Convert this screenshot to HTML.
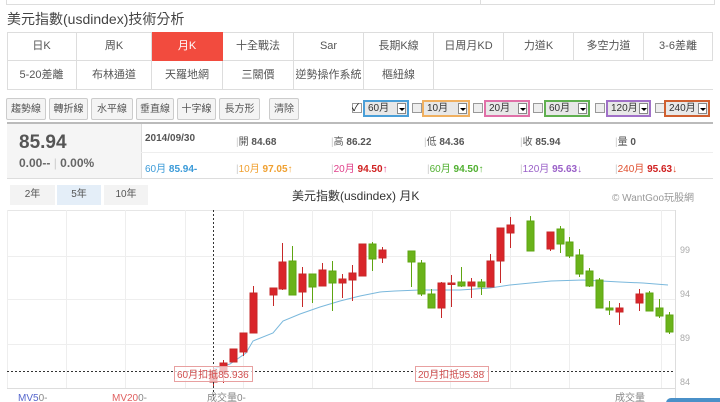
<!DOCTYPE html>
<html><head><meta charset="utf-8"><style>
body{margin:0;width:720px;height:402px;overflow:hidden;background:#fff;font-family:"Liberation Sans","Noto Sans CJK TC",sans-serif;position:relative;color:#555}
.a{position:absolute;white-space:nowrap}
.tab{position:absolute;height:29px;line-height:29px;text-align:center;font-size:11px;color:#555;border-right:1px solid #ddd;border-bottom:1px solid #ddd;box-sizing:border-box}
.btn{position:absolute;top:98px;height:22px;line-height:22px;border:1px solid #ccc;border-radius:2px;background:#f4f4f4;font-size:10px;text-align:center;box-sizing:border-box;color:#555}
.cb{position:absolute;top:103px;width:8px;height:8px;border:1px solid #999;background:#eee}
.sel{position:absolute;top:100px;height:17px;border:2px solid;box-sizing:border-box;font-size:10px;line-height:13px;padding-left:3px;background:#e8e8e8;color:#333}
.sel i{position:absolute;right:1px;top:1px;width:9px;height:11px;background:#fff;border:1px solid #888;box-sizing:border-box}
.sel i:after{content:"";position:absolute;left:1px;top:4px;border:3px solid transparent;border-top:3px solid #000}
.c{font-size:10px;color:#555}
</style></head><body>
<div class="a" style="left:6px;top:-1px;width:707px;height:5px;border:1px solid #ddd;border-top:0"></div>
<div class="a" style="left:480px;top:0;width:1px;height:5px;background:#ddd"></div>
<div class="a" style="left:7px;top:9px;font-size:14px;color:#444">美元指數(usdindex)技術分析</div>
<div class="a" style="left:7px;top:32px;width:706px;height:58px;border:1px solid #ddd;border-right:0;box-sizing:border-box"></div>
<div class="tab" style="left:7px;top:32px;width:70px;border-top:0">日K</div>
<div class="tab" style="left:77px;top:32px;width:75px">周K</div>
<div class="tab" style="left:152px;top:32px;width:71px;background:#f24b3e;color:#fff;border-color:#f24b3e">月K</div>
<div class="tab" style="left:223px;top:32px;width:71px">十全戰法</div>
<div class="tab" style="left:294px;top:32px;width:70px">Sar</div>
<div class="tab" style="left:364px;top:32px;width:70px">長期K線</div>
<div class="tab" style="left:434px;top:32px;width:70px">日周月KD</div>
<div class="tab" style="left:504px;top:32px;width:70px">力道K</div>
<div class="tab" style="left:574px;top:32px;width:70px">多空力道</div>
<div class="tab" style="left:644px;top:32px;width:69px">3-6差離</div>
<div class="tab" style="left:7px;top:61px;width:70px">5-20差離</div>
<div class="tab" style="left:77px;top:61px;width:75px">布林通道</div>
<div class="tab" style="left:152px;top:61px;width:71px">天羅地網</div>
<div class="tab" style="left:223px;top:61px;width:71px">三關價</div>
<div class="tab" style="left:294px;top:61px;width:70px">逆勢操作系統</div>
<div class="tab" style="left:364px;top:61px;width:70px">樞紐線</div>
<div class="btn" style="left:6px;width:40px">趨勢線</div>
<div class="btn" style="left:49px;width:39px">轉折線</div>
<div class="btn" style="left:91px;width:42px">水平線</div>
<div class="btn" style="left:136px;width:38px">垂直線</div>
<div class="btn" style="left:177px;width:39px">十字線</div>
<div class="btn" style="left:219px;width:41px">長方形</div>
<div class="btn" style="left:269px;width:30px">清除</div>
<div class="cb" style="left:352px;background:#fff">​</div>
<div class="a" style="left:352px;top:99px;font-size:10px;color:#000">✓</div>
<div class="sel" style="left:363px;width:46px;border-color:#4a9fd8">60月<i></i></div>
<div class="cb" style="left:412px"></div>
<div class="sel" style="left:422px;width:48px;border-color:#f0b060">10月<i></i></div>
<div class="cb" style="left:473px"></div>
<div class="sel" style="left:484px;width:46px;border-color:#e070a8">20月<i></i></div>
<div class="cb" style="left:533px"></div>
<div class="sel" style="left:544px;width:46px;border-color:#60b050">60月<i></i></div>
<div class="cb" style="left:595px"></div>
<div class="sel" style="left:606px;width:45px;border-color:#a070c8">120月<i></i></div>
<div class="cb" style="left:655px"></div>
<div class="sel" style="left:664px;width:46px;border-color:#d06030">240月<i></i></div>
<div class="a" style="left:7px;top:122px;width:706px;height:2px;background:#bbb"></div>
<div class="a" style="left:7px;top:124px;width:134px;height:54px;background:#f5f5f5;border-right:1px solid #ddd"></div>
<div class="a" style="left:141px;top:152px;width:572px;height:1px;background:#eee"></div>
<div class="a" style="left:7px;top:178px;width:706px;height:1px;background:#ddd"></div>
<div class="a" style="left:19px;top:132px;font-size:19px;font-weight:bold;color:#555">85.94</div>
<div class="a" style="left:19px;top:156px;font-size:12px;font-weight:bold;color:#666">0.00-- <span style="color:#ccc;font-weight:normal">|</span> 0.00%</div>
<div class="a c" style="left:145px;top:133px;font-weight:bold">2014/09/30</div>
<div class="a c" style="left:236px;top:133px"><span style="color:#ccc">|</span>開 <b>84.68</b></div>
<div class="a c" style="left:331px;top:133px"><span style="color:#ccc">|</span>高 <b>86.22</b></div>
<div class="a c" style="left:424px;top:133px"><span style="color:#ccc">|</span>低 <b>84.36</b></div>
<div class="a c" style="left:520px;top:133px"><span style="color:#ccc">|</span>收 <b>85.94</b></div>
<div class="a c" style="left:615px;top:133px"><span style="color:#ccc">|</span>量 <b>0</b></div>
<div class="a c" style="left:145px;top:160px;color:#3a9ad8">60月 <b>85.94-</b></div>
<div class="a c" style="left:236px;top:160px;color:#f0a030"><span style="color:#ccc">|</span>10月 <b>97.05</b>↑</div>
<div class="a c" style="left:331px;top:160px;color:#e0408a"><span style="color:#ccc">|</span>20月 <b style="color:#d02020">94.50</b>↑</div>
<div class="a c" style="left:427px;top:160px;color:#50b030"><span style="color:#ccc">|</span>60月 <b>94.50</b>↑</div>
<div class="a c" style="left:520px;top:160px;color:#9a60c8"><span style="color:#ccc">|</span>120月 <b>95.63</b>↓</div>
<div class="a c" style="left:615px;top:160px;color:#e05030"><span style="color:#ccc">|</span>240月 <b style="color:#d02020">95.63</b>↓</div>
<div class="a" style="left:10px;top:185px;width:45px;height:20px;background:#f3f3f3;font-size:10px;line-height:20px;text-align:center">2年</div>
<div class="a" style="left:57px;top:185px;width:44px;height:20px;background:#e4eef8;font-size:10px;line-height:20px;text-align:center">5年</div>
<div class="a" style="left:104px;top:185px;width:44px;height:20px;background:#f3f3f3;font-size:10px;line-height:20px;text-align:center">10年</div>
<div class="a" style="left:292px;top:187px;font-size:12px;color:#333">美元指數(usdindex) 月K</div>
<div class="a" style="left:612px;top:189px;font-size:10px;color:#999">© WantGoo玩股網</div>
<svg class="a" style="left:0;top:0" width="720" height="402">
<g stroke="#eee" stroke-width="1">
<line x1="7" y1="210.5" x2="675" y2="210.5" stroke="#e6e6e6"/>
<line x1="7.5" y1="210" x2="7.5" y2="388"/>
<line x1="7" y1="256.5" x2="675" y2="256.5"/><line x1="7" y1="299.5" x2="675" y2="299.5"/><line x1="7" y1="344.5" x2="675" y2="344.5"/>
<line x1="66.5" y1="210" x2="66.5" y2="388"/><line x1="125.5" y1="210" x2="125.5" y2="388"/><line x1="185.5" y1="210" x2="185.5" y2="388"/><line x1="243.5" y1="210" x2="243.5" y2="388"/><line x1="312.5" y1="210" x2="312.5" y2="388"/><line x1="372.5" y1="210" x2="372.5" y2="388"/><line x1="450.5" y1="210" x2="450.5" y2="388"/><line x1="510.5" y1="210" x2="510.5" y2="388"/><line x1="569.5" y1="210" x2="569.5" y2="388"/><line x1="661.5" y1="210" x2="661.5" y2="388"/>
<line x1="675.5" y1="210" x2="675.5" y2="402" stroke="#ddd"/>
<line x1="7" y1="388.5" x2="675" y2="388.5" stroke="#ddd"/>
</g>
<polyline fill="none" stroke="#7ab8dc" stroke-width="1" points="213,369 230,364 246,353 253,341 273,333 283,321 300,314 320,307 340,301 360,296 380,292 395,291 420,290 460,290 490,288 510,285 551,281 583,280 620,282 643,283 668,285"/>
<g stroke-width="1">
<g stroke="#c62828" fill="#d9252a">
<line x1="213.5" y1="368" x2="213.5" y2="386"/><rect x="210" y="371" width="7" height="11"/>
<line x1="223.5" y1="360" x2="223.5" y2="383"/><rect x="220" y="363" width="7" height="9"/>
<line x1="233.5" y1="349" x2="233.5" y2="362"/><rect x="230" y="349" width="7" height="13"/>
<line x1="243.5" y1="333" x2="243.5" y2="356"/><rect x="240" y="333" width="7" height="19"/>
<line x1="253.5" y1="286" x2="253.5" y2="333"/><rect x="250" y="293" width="7" height="40"/>
<line x1="273.5" y1="288" x2="273.5" y2="306"/><rect x="270" y="288" width="7" height="7"/>
<line x1="282.5" y1="243" x2="282.5" y2="290"/><rect x="279" y="262" width="7" height="27"/>
<line x1="302.5" y1="267" x2="302.5" y2="307"/><rect x="299" y="274" width="7" height="18"/>
<line x1="322.5" y1="263" x2="322.5" y2="286"/><rect x="319" y="270" width="7" height="16"/>
<line x1="342.5" y1="274" x2="342.5" y2="298"/><rect x="339" y="279" width="7" height="4"/>
<line x1="352.5" y1="265" x2="352.5" y2="301"/><rect x="349" y="273" width="7" height="7"/>
<line x1="362.5" y1="244" x2="362.5" y2="276"/><rect x="359" y="244" width="7" height="32"/>
<line x1="382.5" y1="247" x2="382.5" y2="263"/><rect x="379" y="250" width="7" height="8"/>
<line x1="441.5" y1="282" x2="441.5" y2="318"/><rect x="438" y="283" width="7" height="25"/>
<line x1="451.5" y1="275" x2="451.5" y2="307"/><rect x="448" y="283" width="7" height="1.5"/>
<line x1="471.5" y1="278" x2="471.5" y2="298"/><rect x="468" y="282" width="7" height="4"/>
<line x1="490.5" y1="254" x2="490.5" y2="287"/><rect x="487" y="261" width="7" height="26"/>
<line x1="500.5" y1="228" x2="500.5" y2="283"/><rect x="497" y="228" width="7" height="33"/>
<line x1="510.5" y1="217" x2="510.5" y2="248"/><rect x="507" y="225" width="7" height="8"/>
<line x1="550.5" y1="232" x2="550.5" y2="251"/><rect x="547" y="232" width="7" height="17"/>
<line x1="619.5" y1="303" x2="619.5" y2="325"/><rect x="616" y="308" width="7" height="4"/>
<line x1="639.5" y1="289" x2="639.5" y2="311"/><rect x="636" y="294" width="7" height="9"/>
</g>
<g stroke="#5ea512" fill="#6ab31a">
<line x1="292.5" y1="246" x2="292.5" y2="295"/><rect x="289" y="261" width="7" height="34"/>
<line x1="312.5" y1="274" x2="312.5" y2="303"/><rect x="309" y="274" width="7" height="13"/>
<line x1="332.5" y1="261" x2="332.5" y2="311"/><rect x="329" y="271" width="7" height="12"/>
<line x1="372.5" y1="242" x2="372.5" y2="271"/><rect x="369" y="244" width="7" height="15"/>
<line x1="411.5" y1="251" x2="411.5" y2="287"/><rect x="408" y="251" width="7" height="11"/>
<line x1="421.5" y1="260" x2="421.5" y2="296"/><rect x="418" y="263" width="7" height="31"/>
<line x1="431.5" y1="289" x2="431.5" y2="308"/><rect x="428" y="294" width="7" height="14"/>
<line x1="461.5" y1="267" x2="461.5" y2="287"/><rect x="458" y="282" width="7" height="4"/>
<line x1="481.5" y1="279" x2="481.5" y2="295"/><rect x="478" y="282" width="7" height="5"/>
<line x1="530.5" y1="216" x2="530.5" y2="251"/><rect x="527" y="221" width="7" height="30"/>
<line x1="560.5" y1="226" x2="560.5" y2="253"/><rect x="557" y="229" width="7" height="15"/>
<line x1="569.5" y1="237" x2="569.5" y2="258"/><rect x="566" y="242" width="7" height="14"/>
<line x1="579.5" y1="249" x2="579.5" y2="277"/><rect x="576" y="255" width="7" height="19"/>
<line x1="589.5" y1="268" x2="589.5" y2="287"/><rect x="586" y="271" width="7" height="15"/>
<line x1="599.5" y1="278" x2="599.5" y2="308"/><rect x="596" y="280" width="7" height="28"/>
<line x1="609.5" y1="301" x2="609.5" y2="315"/><rect x="606" y="308" width="7" height="2"/>
<line x1="649.5" y1="291" x2="649.5" y2="311"/><rect x="646" y="293" width="7" height="18"/>
<line x1="659.5" y1="299" x2="659.5" y2="318"/><rect x="656" y="308" width="7" height="8"/>
<line x1="669.5" y1="312" x2="669.5" y2="334"/><rect x="666" y="315" width="7" height="17"/>
</g>
</g>
<line x1="7" y1="371.5" x2="675" y2="371.5" stroke="#333" stroke-dasharray="2,2"/>
<line x1="213.5" y1="210" x2="213.5" y2="402" stroke="#333" stroke-dasharray="2,2"/>
<rect x="174.5" y="366.5" width="78" height="15" fill="rgba(255,255,255,0.7)" stroke="#e8a0a0"/>
<text x="177" y="378" font-size="10" fill="#d05050" font-family="Liberation Sans,Noto Sans CJK TC,sans-serif">60月扣抵85.936</text>
<rect x="415.5" y="366.5" width="73" height="15" fill="rgba(255,255,255,0.7)" stroke="#e8a0a0"/>
<text x="418" y="378" font-size="10" fill="#d05050" font-family="Liberation Sans,Noto Sans CJK TC,sans-serif">20月扣抵95.88</text>
<g font-size="9" fill="#aaa" font-family="Liberation Sans,sans-serif">
<text x="680" y="253">99</text><text x="680" y="297">94</text><text x="680" y="341">89</text><text x="680" y="385">84</text></g>
<g font-size="10" font-family="Liberation Sans,Noto Sans CJK TC,sans-serif">
<text x="18" y="401" fill="#5566cc">MV5<tspan fill="#888">0-</tspan></text>
<text x="112" y="401" fill="#e06060">MV20<tspan fill="#888">0-</tspan></text>
<text x="207" y="401" fill="#888">成交量0-</text>
<text x="615" y="401" fill="#888">成交量</text></g>
<rect x="666" y="398" width="60" height="10" rx="5" fill="#4a90c8"/>
</svg>
</body></html>
